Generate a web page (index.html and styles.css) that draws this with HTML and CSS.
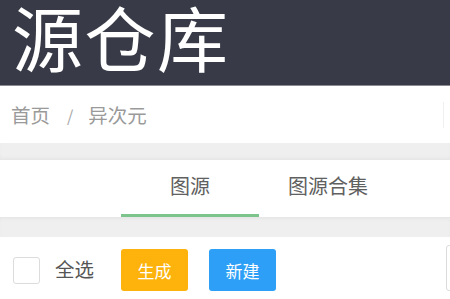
FILE: index.html
```html
<!DOCTYPE html>
<html lang="zh">
<head>
<meta charset="utf-8">
<link rel="stylesheet" href="styles.css">
</head>
<body>
<header class="topbar"><h1 class="title">源仓库</h1></header>
<nav class="crumbs">
  <span class="crumb">首页</span><span class="sep">/</span><span class="crumb">异次元</span>
  <span class="crumb-edge"></span>
</nav>
<div class="band band-a"></div>
<div class="tabs">
  <div class="tab active">图源</div>
  <div class="tab">图源合集</div>
</div>
<div class="band band-b"></div>
<div class="toolbar">
  <span class="check"></span>
  <span class="check-label">全选</span>
  <button class="btn btn-yellow">生成</button>
  <button class="btn btn-blue">新建</button>
  <span class="search"></span>
</div>
</body>
</html>
```
FILE: styles.css
```css
* { box-sizing: border-box; }
html, body { margin: 0; padding: 0; background: #fff; overflow: hidden; }
body { font-family: "Noto Sans CJK SC", "Noto Sans", sans-serif; width: 450px; height: 299px; }
.topbar {
  height: 86px;
  background: #383b47;
  border-bottom: 1px solid #8a8c93;
  padding-left: 12px;
  display: flex;
  align-items: flex-start;
}
.title {
  margin: 0;
  font-weight: 400;
  font-size: 71px;
  line-height: 70px;
  color: #fff;
  letter-spacing: 1.5px;
}
.crumbs {
  height: 57px;
  display: flex;
  align-items: center;
  padding-left: 11px;
  color: #9a9a9a;
  font-size: 19.5px;
  position: relative;
}
.sep { margin: 0 15px 0 17px; font-size: 16px; color: #a5a5a5; }
.crumb-edge {
  position: absolute;
  left: 443px;
  top: 16px;
  width: 10px;
  height: 26px;
  border-left: 1px solid #f0f0f0;
}
.band { background: #efefef; }
.band-a { height: 17px; box-shadow: inset 0 -3px 4px -2px #e2e2e2; }
.band-b { height: 20px; box-shadow: inset 0 3px 4px -2px #e2e2e2; }
.tabs {
  height: 57px;
  display: flex;
  padding-left: 121px;
  background: #fff;
}
.tab {
  width: 138px;
  display: flex;
  align-items: center;
  justify-content: center;
  font-size: 20px;
  color: #606060;
  padding-bottom: 3px;
  border-bottom: 3px solid transparent;
}
.tab.active { border-bottom-color: #7cc48b; }
.toolbar {
  height: 62px;
  display: flex;
  align-items: center;
  padding-left: 13px;
  position: relative;
}
.check {
  width: 27px;
  height: 27px;
  border: 1px solid #dcdcdc;
  border-radius: 3px;
  background: #fff;
  margin-top: 4px;
}
.check-label { margin-left: 15px; font-size: 19.5px; color: #555; margin-right: 27px; }
.btn {
  border: none;
  width: 67px;
  height: 42px;
  border-radius: 3px;
  color: #fff;
  font-family: inherit;
  font-size: 17px;
  padding: 0;
  margin-top: 4px;
}
.btn-yellow { background: #fdb30c; }
.btn-blue { background: #2e9ff6; margin-left: 21px; }
.search {
  position: absolute;
  left: 446px;
  top: 8px;
  width: 40px;
  height: 46px;
  border: 1px solid #dcdcdc;
  border-radius: 3px;
}
```
